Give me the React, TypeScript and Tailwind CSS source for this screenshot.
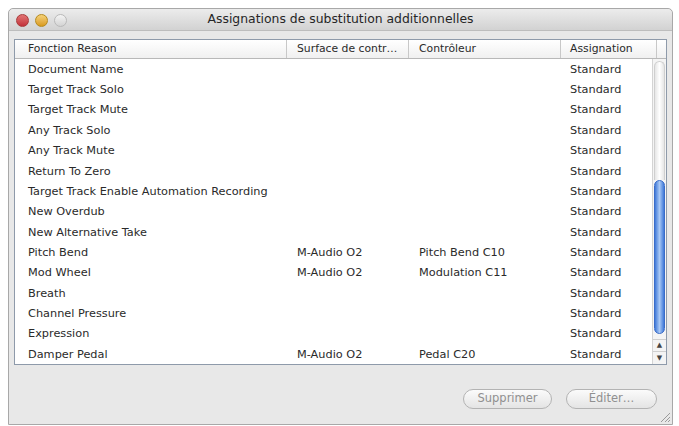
import React from 'react';

interface Row {
  fn: string;
  surface: string;
  ctrl: string;
  assign: string;
}

const rows: Row[] = [
  { fn: 'Document Name', surface: '', ctrl: '', assign: 'Standard' },
  { fn: 'Target Track Solo', surface: '', ctrl: '', assign: 'Standard' },
  { fn: 'Target Track Mute', surface: '', ctrl: '', assign: 'Standard' },
  { fn: 'Any Track Solo', surface: '', ctrl: '', assign: 'Standard' },
  { fn: 'Any Track Mute', surface: '', ctrl: '', assign: 'Standard' },
  { fn: 'Return To Zero', surface: '', ctrl: '', assign: 'Standard' },
  { fn: 'Target Track Enable Automation Recording', surface: '', ctrl: '', assign: 'Standard' },
  { fn: 'New Overdub', surface: '', ctrl: '', assign: 'Standard' },
  { fn: 'New Alternative Take', surface: '', ctrl: '', assign: 'Standard' },
  { fn: 'Pitch Bend', surface: 'M-Audio O2', ctrl: 'Pitch Bend C10', assign: 'Standard' },
  { fn: 'Mod Wheel', surface: 'M-Audio O2', ctrl: 'Modulation C11', assign: 'Standard' },
  { fn: 'Breath', surface: '', ctrl: '', assign: 'Standard' },
  { fn: 'Channel Pressure', surface: '', ctrl: '', assign: 'Standard' },
  { fn: 'Expression', surface: '', ctrl: '', assign: 'Standard' },
  { fn: 'Damper Pedal', surface: 'M-Audio O2', ctrl: 'Pedal C20', assign: 'Standard' },
];

function Scrollbar() {
  return (
    <div className="w-[14px] flex flex-col border-l border-[#d4d4d4] bg-[#f4f4f4]">
      <div className="h-[119px] mx-[1px] mt-[2px] rounded-t-full border border-b-0 border-[#cfcfcf] bg-gradient-to-r from-[#e6e6e6] via-white to-[#e6e6e6]" />
      <div className="h-[154px] mx-[1px] rounded-full border border-[#3a6cc8] bg-gradient-to-r from-[#3f78d8] via-[#a9c8f4] to-[#3f78d8]" />
      <div className="flex-1" />
      <div className="h-[12px] flex items-center justify-center border-t border-[#cfcfcf] text-[7px] text-[#444]">▲</div>
      <div className="h-[13px] flex items-center justify-center border-t border-[#cfcfcf] text-[7px] text-[#444]">▼</div>
    </div>
  );
}

export default function App() {
  return (
    <div className="w-[679px] h-[426px] bg-white pt-[8px] pl-[8px] overflow-hidden font-['DejaVu_Sans',sans-serif]">
      <div className="w-[665px] h-[417px] flex flex-col bg-[#e8e8e8] border border-[#a8a8a8] rounded-t-[5px]">
        {/* title bar */}
        <div className="relative h-[22px] flex items-center justify-center bg-gradient-to-b from-[#ececec] to-[#d2d2d2] border-b border-[#bdbdbd] rounded-t-[5px]">
          <div className="absolute left-[7px] top-[5px] flex gap-[6px]">
            <div className="w-[13px] h-[13px] rounded-full border border-[#a83a3a] bg-gradient-to-b from-[#e27373] to-[#c22f3b]" />
            <div className="w-[13px] h-[13px] rounded-full border border-[#b58a1e] bg-gradient-to-b from-[#f5d277] to-[#d99a17]" />
            <div className="w-[13px] h-[13px] rounded-full border border-[#b9b9b9] bg-gradient-to-b from-[#f4f4f4] to-[#d3d3d3]" />
          </div>
          <span className="text-[12.4px] text-[#262626]">Assignations de substitution additionnelles</span>
        </div>

        {/* table */}
        <div className="mt-[8px] ml-[5px] w-[653px] h-[326px] flex flex-col border border-[#8e9aaa] bg-white text-[11.3px] text-[#2a2a2a]">
          <div className="h-[19px] flex items-stretch border-b border-[#b8b8b8] bg-gradient-to-b from-white to-[#f0f0f0] text-[10.8px]">
            <div className="w-[272px] pl-[13px] flex items-center border-r border-[#c8c8c8]">Fonction Reason</div>
            <div className="w-[122px] pl-[10px] flex items-center border-r border-[#c8c8c8] whitespace-nowrap">Surface de contr…</div>
            <div className="w-[152px] pl-[10px] flex items-center border-r border-[#c8c8c8]">Contrôleur</div>
            <div className="w-[96px] pl-[9px] flex items-center border-r border-[#c8c8c8]">Assignation</div>
            <div className="flex-1" />
          </div>
          <div className="flex flex-1 min-h-0">
            <div className="flex-1 flex flex-col pt-[1px]">
              {rows.map((r) => (
                <div key={r.fn} className="h-[20.36px] shrink-0 flex items-center">
                  <div className="w-[272px] pl-[13px] whitespace-nowrap">{r.fn}</div>
                  <div className="w-[122px] pl-[10px] whitespace-nowrap">{r.surface}</div>
                  <div className="w-[152px] pl-[10px] whitespace-nowrap">{r.ctrl}</div>
                  <div className="pl-[9px]">{r.assign}</div>
                </div>
              ))}
            </div>
            <Scrollbar />
          </div>
        </div>

        {/* buttons */}
        <div className="flex-1 relative flex items-start justify-end gap-[14px] pr-[15px] pt-[24px]">
          <button className="w-[89px] h-[20px] rounded-full border-[1.5px] border-[#b3b3b3] bg-gradient-to-b from-[#fbfbfb] to-[#e4e4e4] text-[11.5px] text-[#909090]">
            Supprimer
          </button>
          <button className="w-[91px] h-[20px] rounded-full border-[1.5px] border-[#b3b3b3] bg-gradient-to-b from-[#fbfbfb] to-[#e4e4e4] text-[11.5px] text-[#909090]">
            Éditer…
          </button>
          <svg className="absolute right-[1px] bottom-[1px]" width="12" height="12" viewBox="0 0 12 12">
            <path d="M11 2 L2 11 M11 6 L6 11 M11 9 L9 11" stroke="#9a9a9a" strokeWidth="1" fill="none" />
          </svg>
        </div>
      </div>
    </div>
  );
}
